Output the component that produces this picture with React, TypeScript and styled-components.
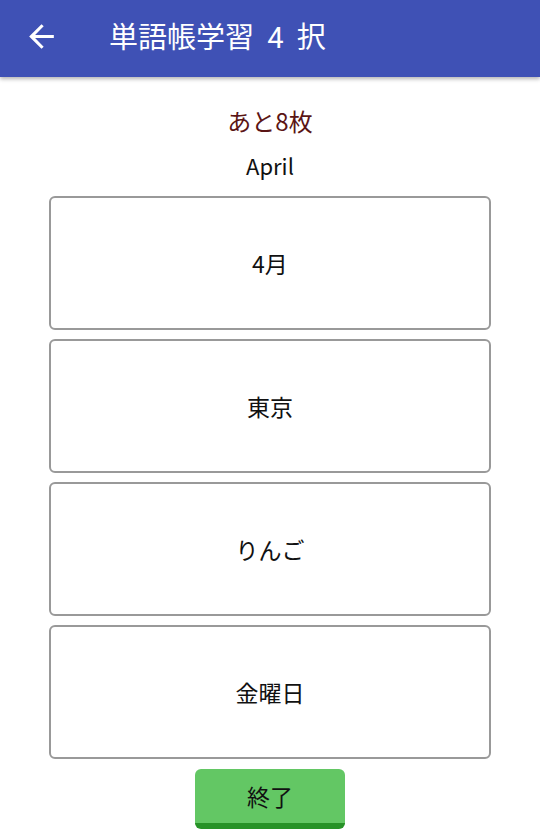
import React from "react";
import styled, { createGlobalStyle } from "styled-components";

const Global = createGlobalStyle`
  html, body { margin: 0; padding: 0; background: #fff; }
  body { font-family: "Noto Sans", "Noto Sans CJK JP", sans-serif; }
`;

const Page = styled.div`
  width: 540px;
  height: 835px;
  overflow: hidden;
  display: flex;
  flex-direction: column;
`;

const AppBar = styled.header`
  height: 77px;
  background: #3f51b5;
  display: flex;
  align-items: center;
  padding-left: 23px;
  box-shadow: 0 2px 4px rgba(0, 0, 0, 0.3);
  position: relative;
  z-index: 1;
  flex-shrink: 0;
`;

const BackButton = styled.button`
  background: none;
  border: none;
  padding: 0;
  width: 37px;
  height: 37px;
  display: flex;
  align-items: center;
  justify-content: center;
  color: #fff;
  margin-right: 49px;
  margin-top: -5px;
`;

const Title = styled.h1`
  margin: 0;
  color: #fff;
  font-size: 29px;
  font-weight: 400;
  font-family: Roboto, "Noto Sans CJK JP", sans-serif;
  margin-top: -8px;
  white-space: pre;
  word-spacing: 6px;
`;

const Content = styled.main`
  display: flex;
  flex-direction: column;
  align-items: center;
  padding-top: 26px;
`;

const Remaining = styled.div`
  color: #5b1515;
  font-size: 24px;
  line-height: 36px;
  font-family: "Noto Sans CJK JP", sans-serif;
`;

const Word = styled.div`
  color: #111;
  font-size: 22px;
  line-height: 32px;
  margin-top: 10px;
  font-family: "Noto Sans CJK JP", sans-serif;
`;

const Choices = styled.div`
  display: flex;
  flex-direction: column;
  gap: 9px;
  margin-top: 15px;
  width: 442px;
`;

const Choice = styled.button`
  height: 134px;
  box-sizing: border-box;
  border: 2px solid #999;
  border-radius: 6px;
  background: #fff;
  font-family: "Noto Sans CJK JP", sans-serif;
  font-size: 23px;
  color: #111;
  display: flex;
  align-items: center;
  justify-content: center;
  padding: 0;
`;

const EndButton = styled.button`
  margin-top: 10px;
  width: 150px;
  height: 60px;
  box-sizing: border-box;
  background: #63c764;
  border: none;
  border-bottom: 6px solid #279227;
  border-radius: 6px;
  font-family: "Noto Sans CJK JP", sans-serif;
  font-size: 23px;
  color: #111;
  padding: 0;
  display: flex;
  align-items: center;
  justify-content: center;
`;

const choices = ["4月", "東京", "りんご", "金曜日"];

export default function App() {
  return (
    <Page>
      <Global />
      <AppBar>
        <BackButton aria-label="back">
          <svg width="37" height="37" viewBox="0 0 24 24" fill="#fff">
            <path d="M20 11H7.83l5.59-5.59L12 4l-8 8 8 8 1.41-1.41L7.83 13H20v-2z" />
          </svg>
        </BackButton>
        <Title>{"単語帳学習 4 択"}</Title>
      </AppBar>
      <Content>
        <Remaining>あと8枚</Remaining>
        <Word>April</Word>
        <Choices>
          {choices.map((c) => (
            <Choice key={c}>{c}</Choice>
          ))}
        </Choices>
        <EndButton>終了</EndButton>
      </Content>
    </Page>
  );
}
